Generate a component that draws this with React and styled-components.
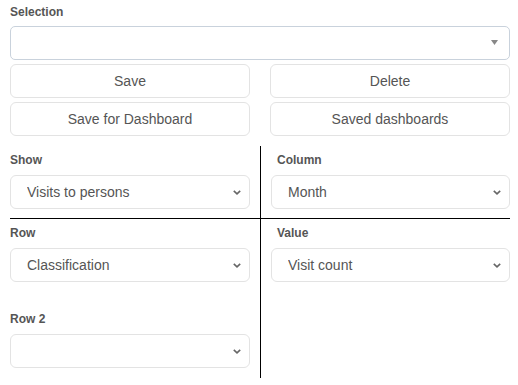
import React from "react";
import styled, { createGlobalStyle } from "styled-components";

const Global = createGlobalStyle`
  body {
    margin: 0;
    background: #fff;
    font-family: "Liberation Sans", Arial, sans-serif;
    color: #555;
  }
`;

const Page = styled.div`
  width: 500px;
  padding: 4px 8px 0 10px;
`;

const Label = styled.div`
  font-size: 12px;
  font-weight: bold;
  line-height: 16px;
  color: #555;
  margin-bottom: ${(p) => p.gap || 7}px;
  padding-left: ${(p) => p.indent || 0}px;
`;

const Combo = styled.div`
  position: relative;
  height: 34px;
  box-sizing: border-box;
  border: 1px solid #c9d2dc;
  border-radius: 5px;
  background: #fff;
  svg {
    position: absolute;
    right: 11px;
    top: 13px;
  }
`;

const ButtonGrid = styled.div`
  display: grid;
  grid-template-columns: 1fr 1fr;
  column-gap: 20px;
  row-gap: 4px;
  margin-top: 4px;
`;

const Button = styled.button`
  height: 34px;
  border: 1px solid #e3e3e3;
  border-radius: 6px;
  background: #fff;
  font-family: inherit;
  font-size: 14px;
  color: #555;
  padding: 0;
`;

const Table = styled.div`
  display: grid;
  grid-template-columns: 251px 249px;
  margin-top: 10px;
`;

const Cell = styled.div`
  box-sizing: border-box;
  padding-top: 6px;
  padding-bottom: ${(p) => (p.top ? 9 : 10)}px;
  padding-left: ${(p) => (p.right ? 10 : 0)}px;
  padding-right: ${(p) => (p.right ? 0 : 10)}px;
  border-right: ${(p) => (p.right ? "none" : "1px solid #000")};
  border-bottom: ${(p) => (p.top ? "1px solid #000" : "none")};
`;

const SelectWrap = styled.div`
  position: relative;
  margin-bottom: ${(p) => p.gap || 0}px;
  svg {
    position: absolute;
    right: 9px;
    top: 15px;
    pointer-events: none;
  }
`;

const Select = styled.select`
  appearance: none;
  width: 100%;
  height: 34px;
  box-sizing: border-box;
  border: 1px solid #e3e3e3;
  border-radius: 6px;
  background: #fff;
  padding: 0 30px 0 16px;
  font-family: "Liberation Sans", Arial, sans-serif;
  font-size: 14px;
  color: #555;
  outline: none;
`;

const Chevron = () => (
  <svg width="8" height="5" viewBox="0 0 8 5">
    <path d="M0.8 0.8 L4 3.8 L7.2 0.8" fill="none" stroke="#666" strokeWidth="1.6" />
  </svg>
);

const Field = ({ label, value, gap, indent }) => (
  <>
    <Label indent={indent}>{label}</Label>
    <SelectWrap gap={gap}>
      <Select defaultValue={value}>
        <option value={value}>{value}</option>
      </Select>
      <Chevron />
    </SelectWrap>
  </>
);

export default function App() {
  return (
    <Page>
      <Global />
      <Label gap={6}>Selection</Label>
      <Combo>
        <svg width="7" height="5" viewBox="0 0 7 5">
          <path d="M0 0 H7 L3.5 5 Z" fill="#888" />
        </svg>
      </Combo>
      <ButtonGrid>
        <Button>Save</Button>
        <Button>Delete</Button>
        <Button>Save for Dashboard</Button>
        <Button>Saved dashboards</Button>
      </ButtonGrid>
      <Table>
        <Cell top>
          <Field label="Show" value="Visits to persons" />
        </Cell>
        <Cell top right>
          <Field label="Column" value="Month" indent={6} />
        </Cell>
        <Cell>
          <Field label="Row" value="Classification" gap={29} />
          <Field label="Row 2" value="" />
        </Cell>
        <Cell right>
          <Field label="Value" value="Visit count" indent={6} />
        </Cell>
      </Table>
    </Page>
  );
}
